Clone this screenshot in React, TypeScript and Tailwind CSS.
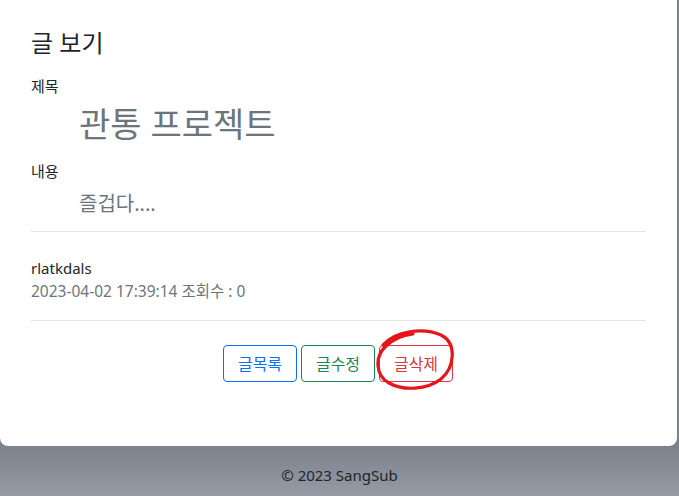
import React from 'react';

const font = '"Noto Sans", "Noto Sans CJK KR", sans-serif';

function ScribbleCircle() {
  return (
    <svg
      className="absolute -left-[6px] -top-[16px] pointer-events-none"
      width="86"
      height="66"
      viewBox="0 0 86 66"
      fill="none"
    >
      <path
        d="M10 16 C22 2 50 -2 68 6 C84 14 82 38 68 50 C54 61 30 62 16 54 C2 46 2 28 12 18 C20 10 30 6 40 5"
        stroke="#e4151b"
        strokeWidth={3.2}
        strokeLinecap="round"
        strokeLinejoin="round"
      />
    </svg>
  );
}

export default function App() {
  return (
    <div
      className="min-h-[496px] w-full flex flex-col bg-[#7b828b] text-[#212529]"
      style={{ fontFamily: font }}
    >
      <div className="w-[677px] h-[446px] bg-white rounded-b-lg px-[31px] pt-[26px]">
        <h4 className="text-[24px] leading-[34px] mb-[15px]">글 보기</h4>

        <div className="text-[15px] leading-[22px]">제목</div>
        <div className="pl-[48px] text-[34px] leading-[46px] text-[#6c757d] mt-[4px] mb-[13px]">관통 프로젝트</div>

        <div className="text-[15px] leading-[22px]">내용</div>
        <div className="pl-[48px] text-[20px] leading-[28px] text-[#6c757d] mt-[8px] mb-[13px]">즐겁다....</div>

        <hr className="border-t border-[#e3e5e8]" />

        <div className="pt-[25px] pb-[18px]">
          <div className="text-[15px] leading-[22px]">rlatkdals</div>
          <div className="text-[15.5px] leading-[22px] text-[#6c757d] mt-[1px]">2023-04-02 17:39:14 조회수 : 0</div>
        </div>

        <hr className="border-t border-[#e3e5e8]" />

        <div className="flex justify-center gap-[4px] mt-[24px] -ml-[1px]">
          <button className="w-[74px] h-[37px] border border-[#0d6efd] text-[#0d6efd] rounded-[4px] text-[16px]">글목록</button>
          <button className="w-[74px] h-[37px] border border-[#198754] text-[#198754] rounded-[4px] text-[16px]">글수정</button>
          <div className="relative">
            <button className="w-[74px] h-[37px] border border-[#dc3545] text-[#dc3545] rounded-[4px] text-[16px]">글삭제</button>
            <ScribbleCircle />
          </div>
        </div>
      </div>

      <footer className="h-[50px] flex items-center justify-center text-[15px] text-[#212529] pt-[9px] bg-gradient-to-b from-[#7b828b] to-[#959ca5]">
        © 2023 SangSub
      </footer>
    </div>
  );
}
